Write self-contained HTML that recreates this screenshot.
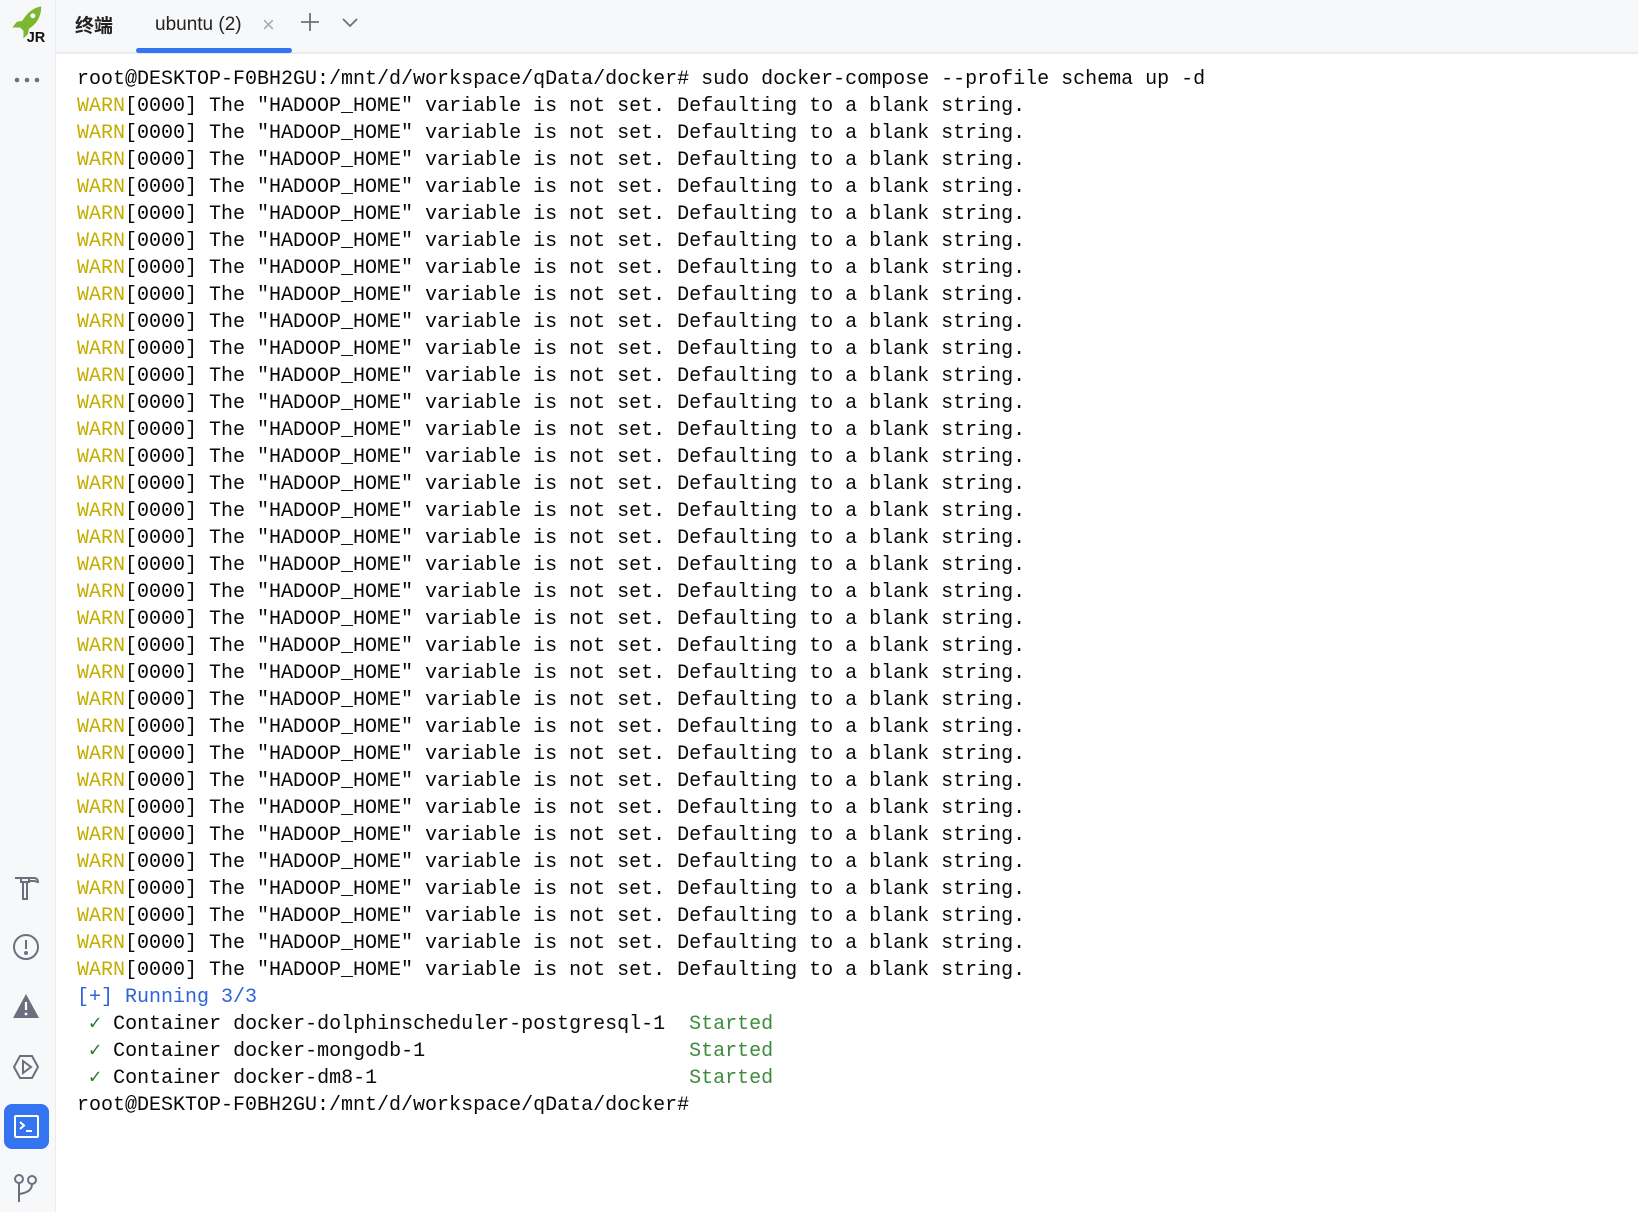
<!DOCTYPE html>
<html><head><meta charset="utf-8"><style>
*{margin:0;padding:0;box-sizing:border-box}
body{width:1638px;height:1212px;background:#fff;position:relative;overflow:hidden;font-family:"Liberation Sans","Noto Sans CJK SC",sans-serif}
#side{position:absolute;left:0;top:0;width:56px;height:1212px;background:#f7f8fa;border-right:1px solid #ebecf0}
#tabs{position:absolute;left:56px;top:0;right:0;height:54px;background:#f7f8fa;border-bottom:2px solid #ebecf0}
.t{position:absolute;top:13px;font-size:19px;color:#222}
#term{position:absolute;left:77px;top:66px;font-family:"Liberation Mono",monospace;font-size:20px;line-height:27px;color:#080808;white-space:pre}
.w{color:#c4ad00}.b{color:#2f63d8}.g{color:#3d8c3d}.c{color:#2a7a2a;font-weight:bold}
svg{position:absolute}
</style></head><body>
<div id="side">
<svg style="left:9px;top:3px" width="40" height="40" viewBox="0 0 36 36">
<path d="M29 3 C22 4 16 9 12 16 L7 17 L3 22 L10 22 L13 25 L13 32 L17 28 L18 23 C25 19 29 12 29 3Z" fill="#7cb82f"/>
<circle cx="21.5" cy="11.5" r="2.2" fill="#fff"/>
<text x="16" y="35" font-family="Liberation Sans" font-weight="bold" font-size="13" fill="#111">JR</text>
</svg>
<svg style="left:13px;top:76px" width="30" height="8"><circle cx="4" cy="4" r="2.3" fill="#6c707e"/><circle cx="14" cy="4" r="2.3" fill="#6c707e"/><circle cx="24" cy="4" r="2.3" fill="#6c707e"/></svg>
<svg style="left:12px;top:873px" width="30" height="30" viewBox="0 0 30 30" fill="none" stroke="#6c707e" stroke-width="2"><path d="M3 5 H22 C25 5 26 7 26 9 L22 8 H17 V6 M9 5 V9 H17 V5 M11 9 V26 H15 V9"/></svg>
<svg style="left:11px;top:932px" width="30" height="30" viewBox="0 0 30 30" fill="none" stroke="#6c707e" stroke-width="2"><circle cx="15" cy="15" r="12"/><path d="M15 8 V17"/><circle cx="15" cy="21" r="1" fill="#6c707e"/></svg>
<svg style="left:11px;top:991px" width="30" height="30" viewBox="0 0 30 30"><path d="M15 3 L28 27 H2Z" fill="#6c707e"/><path d="M15 11 V19" stroke="#fff" stroke-width="2.2"/><circle cx="15" cy="23" r="1.4" fill="#fff"/></svg>
<svg style="left:11px;top:1052px" width="30" height="30" viewBox="0 0 30 30" fill="none" stroke="#6c707e" stroke-width="2"><path d="M9 4 H21 L27 15 L21 26 H9 L3 15Z"/><path d="M12 9 L20 15 L12 21Z"/></svg>
<div style="position:absolute;left:4px;top:1104px;width:45px;height:45px;border-radius:8px;background:#3574f0"></div>
<svg style="left:12px;top:1112px" width="30" height="30" viewBox="0 0 30 30" fill="none" stroke="#fff" stroke-width="2"><rect x="3" y="4" width="23" height="21" rx="1"/><path d="M8 10 L12 13.5 L8 17 M14 19 H20"/></svg>
<svg style="left:11px;top:1172px" width="30" height="32" viewBox="0 0 30 32" fill="none" stroke="#6c707e" stroke-width="2"><circle cx="8" cy="7" r="4"/><circle cx="21" cy="8" r="4"/><path d="M8 11 V30 M21 12 C21 18 16 21 8 22"/></svg>
</div>
<div id="tabs">
<div class="t" style="left:19px;top:11px;font-weight:bold">终端</div>
<div class="t" style="left:99px;top:14px">ubuntu (2)</div>
<div class="t" style="left:206px;color:#aaa;font-size:22px;top:12px">×</div>
<svg style="left:243px;top:11px" width="22" height="22"><path d="M11 2 V20 M2 11 H20" stroke="#6c707e" stroke-width="1.8"/></svg>
<svg style="left:284px;top:16px" width="20" height="14"><path d="M3 3 L10 10 L17 3" fill="none" stroke="#6c707e" stroke-width="1.8"/></svg>
<div style="position:absolute;left:80px;top:48px;width:156px;height:5px;border-radius:3px;background:#3574f0"></div>
</div>
<div id="term">root@DESKTOP-F0BH2GU:/mnt/d/workspace/qData/docker# sudo docker-compose --profile schema up -d
<span class="w">WARN</span>[0000] The "HADOOP_HOME" variable is not set. Defaulting to a blank string.
<span class="w">WARN</span>[0000] The "HADOOP_HOME" variable is not set. Defaulting to a blank string.
<span class="w">WARN</span>[0000] The "HADOOP_HOME" variable is not set. Defaulting to a blank string.
<span class="w">WARN</span>[0000] The "HADOOP_HOME" variable is not set. Defaulting to a blank string.
<span class="w">WARN</span>[0000] The "HADOOP_HOME" variable is not set. Defaulting to a blank string.
<span class="w">WARN</span>[0000] The "HADOOP_HOME" variable is not set. Defaulting to a blank string.
<span class="w">WARN</span>[0000] The "HADOOP_HOME" variable is not set. Defaulting to a blank string.
<span class="w">WARN</span>[0000] The "HADOOP_HOME" variable is not set. Defaulting to a blank string.
<span class="w">WARN</span>[0000] The "HADOOP_HOME" variable is not set. Defaulting to a blank string.
<span class="w">WARN</span>[0000] The "HADOOP_HOME" variable is not set. Defaulting to a blank string.
<span class="w">WARN</span>[0000] The "HADOOP_HOME" variable is not set. Defaulting to a blank string.
<span class="w">WARN</span>[0000] The "HADOOP_HOME" variable is not set. Defaulting to a blank string.
<span class="w">WARN</span>[0000] The "HADOOP_HOME" variable is not set. Defaulting to a blank string.
<span class="w">WARN</span>[0000] The "HADOOP_HOME" variable is not set. Defaulting to a blank string.
<span class="w">WARN</span>[0000] The "HADOOP_HOME" variable is not set. Defaulting to a blank string.
<span class="w">WARN</span>[0000] The "HADOOP_HOME" variable is not set. Defaulting to a blank string.
<span class="w">WARN</span>[0000] The "HADOOP_HOME" variable is not set. Defaulting to a blank string.
<span class="w">WARN</span>[0000] The "HADOOP_HOME" variable is not set. Defaulting to a blank string.
<span class="w">WARN</span>[0000] The "HADOOP_HOME" variable is not set. Defaulting to a blank string.
<span class="w">WARN</span>[0000] The "HADOOP_HOME" variable is not set. Defaulting to a blank string.
<span class="w">WARN</span>[0000] The "HADOOP_HOME" variable is not set. Defaulting to a blank string.
<span class="w">WARN</span>[0000] The "HADOOP_HOME" variable is not set. Defaulting to a blank string.
<span class="w">WARN</span>[0000] The "HADOOP_HOME" variable is not set. Defaulting to a blank string.
<span class="w">WARN</span>[0000] The "HADOOP_HOME" variable is not set. Defaulting to a blank string.
<span class="w">WARN</span>[0000] The "HADOOP_HOME" variable is not set. Defaulting to a blank string.
<span class="w">WARN</span>[0000] The "HADOOP_HOME" variable is not set. Defaulting to a blank string.
<span class="w">WARN</span>[0000] The "HADOOP_HOME" variable is not set. Defaulting to a blank string.
<span class="w">WARN</span>[0000] The "HADOOP_HOME" variable is not set. Defaulting to a blank string.
<span class="w">WARN</span>[0000] The "HADOOP_HOME" variable is not set. Defaulting to a blank string.
<span class="w">WARN</span>[0000] The "HADOOP_HOME" variable is not set. Defaulting to a blank string.
<span class="w">WARN</span>[0000] The "HADOOP_HOME" variable is not set. Defaulting to a blank string.
<span class="w">WARN</span>[0000] The "HADOOP_HOME" variable is not set. Defaulting to a blank string.
<span class="w">WARN</span>[0000] The "HADOOP_HOME" variable is not set. Defaulting to a blank string.
<span class="b">[+] Running 3/3</span>
 <span class="c">✓</span> Container docker-dolphinscheduler-postgresql-1  <span class="g">Started</span>
 <span class="c">✓</span> Container docker-mongodb-1                      <span class="g">Started</span>
 <span class="c">✓</span> Container docker-dm8-1                          <span class="g">Started</span>
root@DESKTOP-F0BH2GU:/mnt/d/workspace/qData/docker#</div>
</body></html>
